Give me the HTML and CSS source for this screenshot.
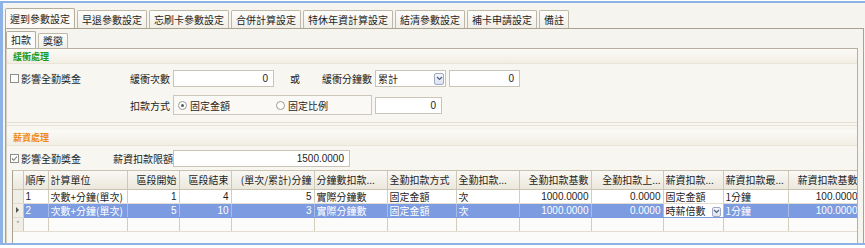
FILE: index.html
```html
<!DOCTYPE html>
<html lang="zh-Hant">
<head>
<meta charset="utf-8">
<link rel="stylesheet" href="styles.css">
</head>
<body>
<div class="frame">
  <div class="tabs">
    <div class="tab active">遲到參數設定</div>
    <div class="tab">早退參數設定</div>
    <div class="tab">忘刷卡參數設定</div>
    <div class="tab">合併計算設定</div>
    <div class="tab">特休年資計算設定</div>
    <div class="tab">結清參數設定</div>
    <div class="tab">補卡申請設定</div>
    <div class="tab">備註</div>
  </div>
  <div class="page">
    <div class="tabs sub">
      <div class="tab active">扣款</div>
      <div class="tab">獎懲</div>
    </div>
    <div class="subpage">
      <div class="group g1">
        <div class="ghead"><span class="gtitle green">緩衝處理</span></div>
        <div class="gbody">
          <div class="row r1">
            <div class="chk w118"><span class="box"></span>影響全勤獎金</div>
            <div class="lbl w42">緩衝次數</div>
            <div class="input w101">0</div>
            <div class="or">或</div>
            <div class="lbl w50">緩衝分鐘數</div>
            <div class="combo w71"><span class="ctext">累計</span><span class="cbtn"><svg width="7" height="5" viewBox="0 0 7 5"><path d="M1 1l2.5 2.5L6 1" fill="none" stroke="#4d6185" stroke-width="1.2"/></svg></span></div>
            <div class="input w71">0</div>
          </div>
          <div class="row r2">
            <div class="w118"></div>
            <div class="lbl w42">扣款方式</div>
            <div class="radios">
              <span class="radio on"></span><span class="rtext">固定金額</span>
              <span class="radio second"></span><span class="rtext">固定比例</span>
            </div>
            <div class="input w67">0</div>
          </div>
        </div>
      </div>
      <div class="group g2">
        <div class="ghead"><span class="gtitle orange">薪資處理</span></div>
        <div class="gbody">
          <div class="row r3">
            <div class="chk w103"><span class="box checked"><svg width="7" height="7" viewBox="0 0 7 7"><path d="M1 3.5l1.8 1.8L6 1.5" fill="none" stroke="#7a7a7a" stroke-width="1.1"/></svg></span>影響全勤獎金</div>
            <div class="lbl w57">薪資扣款限額</div>
            <div class="input w177">1500.0000</div>
          </div>
          <div class="grid">
            <table>
              <colgroup>
                <col style="width:10px"><col style="width:25px"><col style="width:79px"><col style="width:52px"><col style="width:52px"><col style="width:83px"><col style="width:73px"><col style="width:69px"><col style="width:63px"><col style="width:72px"><col style="width:72px"><col style="width:60px"><col style="width:65px"><col style="width:72px">
              </colgroup>
              <thead>
                <tr>
                  <th class="rh"></th><th>順序</th><th>計算單位</th><th class="r">區段開始</th><th class="r">區段結束</th><th class="r">(單次/累計)分鐘</th><th>分鐘數扣款...</th><th>全勤扣款方式</th><th>全勤扣款...</th><th class="r">全勤扣款基數</th><th class="r">全勤扣款上...</th><th>薪資扣款...</th><th>薪資扣款最...</th><th class="r">薪資扣款基數</th>
                </tr>
              </thead>
              <tbody>
                <tr>
                  <td class="rh"></td><td>1</td><td>次數+分鐘(單次)</td><td class="r">1</td><td class="r">4</td><td class="r">5</td><td>實際分鐘數</td><td>固定金額</td><td>次</td><td class="r">1000.0000</td><td class="r">0.0000</td><td>固定金額</td><td>1分鐘</td><td class="r">100.0000</td>
                </tr>
                <tr class="sel">
                  <td class="rh"><span class="arrow"></span></td><td>2</td><td>次數+分鐘(單次)</td><td class="r">5</td><td class="r">10</td><td class="r">3</td><td>實際分鐘數</td><td>固定金額</td><td>次</td><td class="r">1000.0000</td><td class="r">0.0000</td><td class="edit"><span class="etext">時薪倍數</span><span class="cbtn small"><svg width="7" height="5" viewBox="0 0 7 5"><path d="M1 1l2.5 2.5L6 1" fill="none" stroke="#4d6185" stroke-width="1.2"/></svg></span></td><td>1分鐘</td><td class="r">100.0000</td>
                </tr>
                <tr class="new">
                  <td class="rh"><span class="star">*</span></td><td></td><td></td><td></td><td></td><td></td><td></td><td></td><td></td><td></td><td></td><td></td><td></td><td></td>
                </tr>
              </tbody>
            </table>
          </div>
        </div>
      </div>
    </div>
  </div>
</div>
</body>
</html>
```

FILE: styles.css
```css
* { box-sizing: border-box; }
html, body { margin: 0; padding: 0; background: #ffffff; }
body {
  width: 865px;
  height: 248px;
  overflow: hidden;
  font-family: "Noto Sans CJK TC", "Liberation Sans", sans-serif;
  font-size: 10px;
  color: #1e1e1e;
}
.frame {
  margin-top: 1px;
  width: 868px;
  height: 244px;
  border-top: 2px solid #8db3e6;
  border-left: 3px solid #8db3e6;
  border-bottom: 2px solid #8db3e6;
  background: #f6f4ee;
  padding: 5px 0 0 2px;
  overflow: hidden;
}
.tabs {
  display: flex;
  align-items: flex-end;
  gap: 2px;
  height: 20px;
}
.tab {
  height: 18px;
  line-height: 17px;
  padding: 0 4px;
  border: 1px solid #bfb8a6;
  border-bottom: none;
  border-radius: 2px 2px 0 0;
  background: linear-gradient(#fdfdfb, #f0eee7);
  white-space: nowrap;
}
.tab.active {
  height: 20px;
  line-height: 19px;
  background: #fbfaf7;
  border-color: #b4ad9b;
}
.page {
  width: 859px;
  height: 240px;
  border: 1px solid #a9a291;
  border-bottom: none;
  padding: 2px 0 0 0;
}
.tabs.sub {
  height: 17px;
  padding-left: 0;
}
.tabs.sub .tab { height: 15px; line-height: 14px; padding: 0 4px; }
.tabs.sub .tab.active { height: 17px; line-height: 16px; }
.subpage {
  width: 852px;
  height: 210px;
  border-top: 1px solid #b7b09e;
  border-left: 1px solid #d6d0c2;
  border-right: 1px solid #b7b09e;
  background: #f7f6f1;
}
.group {
  border-bottom: 1px solid #e5e0d3;
}
.ghead {
  height: 15px;
  background: linear-gradient(#fbfaf6, #f1eee4);
  border-bottom: 1px solid #e9e4d6;
  padding-left: 6px;
  display: flex;
  align-items: center;
}
.gtitle {
  font-size: 9px;
  font-weight: bold;
  letter-spacing: 0;
}
.green { color: #1c9a1c; }
.orange { color: #f08a10; }
.g1 .gbody { height: 58px; padding: 5px 0 0 3px; }
.g2 { margin-top: 2px; border-top: 1px solid #e9e4d6; border-bottom: none; }
.g2 .ghead { margin-top: 4px; height: 16px; }
.g2 .gbody { padding: 3px 0 0 3px; }
.row {
  display: flex;
  align-items: center;
}
.r1 { height: 19px; }
.r2 { height: 22px; margin-top: 6px; }
.r3 { height: 18px; }
.w118 { width: 118px; flex: none; }
.w103 { width: 103px; flex: none; }
.w42 { width: 42px; flex: none; }
.w50 { width: 50px; flex: none; }
.w57 { width: 57px; flex: none; }
.w101 { width: 101px; flex: none; }
.w71 { width: 71px; flex: none; }
.w67 { width: 67px; flex: none; }
.w177 { width: 177px; flex: none; }
.chk { display: flex; align-items: center; white-space: nowrap; }
.box {
  width: 9px; height: 9px;
  border: 1px solid #8d8d8d;
  background: #fcfcfa;
  margin-right: 2px;
  display: inline-flex;
  align-items: center;
  justify-content: center;
}
.lbl { text-align: right; margin-right: 3px; white-space: nowrap; }
.input {
  height: 17px;
  line-height: 15px;
  background: #ffffff;
  border: 1px solid #c9c4b6;
  text-align: right;
  padding-right: 5px;
  font-family: "Liberation Sans", sans-serif;
  font-size: 10px;
}
.or { width: 48px; flex: none; padding-left: 16px; }
.combo {
  height: 17px;
  background: #ffffff;
  border: 1px solid #c9c4b6;
  display: flex;
  align-items: center;
  justify-content: space-between;
  padding: 0 1px 0 2px;
  margin-right: 3px;
}
.cbtn {
  width: 10px; height: 12px;
  border: 1px solid #9eaac3;
  border-radius: 2px;
  background: linear-gradient(#f4f6fb, #dde3ef);
  display: inline-flex;
  align-items: center;
  justify-content: center;
}
.radios {
  width: 199px; height: 20px;
  flex: none;
  border: 1px solid #cdc7b9;
  background: #faf9f6;
  display: flex;
  align-items: center;
  padding-left: 4px;
  margin-right: 3px;
}
.radio {
  width: 9px; height: 9px;
  border: 1px solid #9a9a9a;
  border-radius: 50%;
  background: #fff;
  margin-right: 3px;
  position: relative;
}
.radio.on::after {
  content: "";
  position: absolute;
  left: 2px; top: 2px;
  width: 3px; height: 3px;
  border-radius: 50%;
  background: #5a5a5a;
}
.radio.second { margin-left: 46px; }
.grid {
  margin: 3px 0 0 2px;
  width: 845px;
  height: 73px;
  overflow: hidden;
  border-left: 1px solid #a9a291;
  border-top: 1px solid #c9c2b2;
  background: #fbfbf9;
}
table {
  border-collapse: collapse;
  table-layout: fixed;
  width: 847px;
}
th, td {
  border-right: 1px solid #d3cdbd;
  border-bottom: 1px solid #e2ddd0;
  padding: 0 2px;
  white-space: nowrap;
  overflow: hidden;
  text-overflow: clip;
  font-weight: normal;
  text-align: left;
}
th {
  height: 18px;
  background: linear-gradient(#f9f8f4, #ebe7dc);
  border-right: 1px solid #cfc8b6;
  border-bottom: 1px solid #c9c2b0;
}
td { height: 14px; line-height: 13px; background: #ffffff; }
.r { text-align: right; }
td.r, td:nth-child(2) { font-family: "Liberation Sans", sans-serif; }
.rh { background: #f1eee5; border-right: 1px solid #cfc8b6; padding: 0; }
th.rh { background: linear-gradient(#f9f8f4, #ebe7dc); }
tr.sel td { background: #7d9be0; color: #ffffff; border-bottom-color: #7d9be0; border-right-color: #a8bbe9; }
tr.sel td.rh { background: #f1eee5; border-right-color: #cfc8b6; border-bottom-color: #e2ddd0; }
tr.sel td.edit { background: #ffffff; color: #1e1e1e; position: relative; padding-right: 0; }
.edit { display: table-cell; }
.etext { display: inline-block; width: 46px; }
.cbtn.small { width: 9px; height: 10px; vertical-align: middle; }
.arrow {
  display: block;
  width: 0; height: 0;
  margin-left: 3px;
  border-left: 3px solid #555;
  border-top: 3px solid transparent;
  border-bottom: 3px solid transparent;
}
.star { display: block; text-align: center; color: #999; font-size: 8px; line-height: 8px; }
tr.new td { background: #fbfbf9; }
tr.new td.rh { background: #f1eee5; }
```
